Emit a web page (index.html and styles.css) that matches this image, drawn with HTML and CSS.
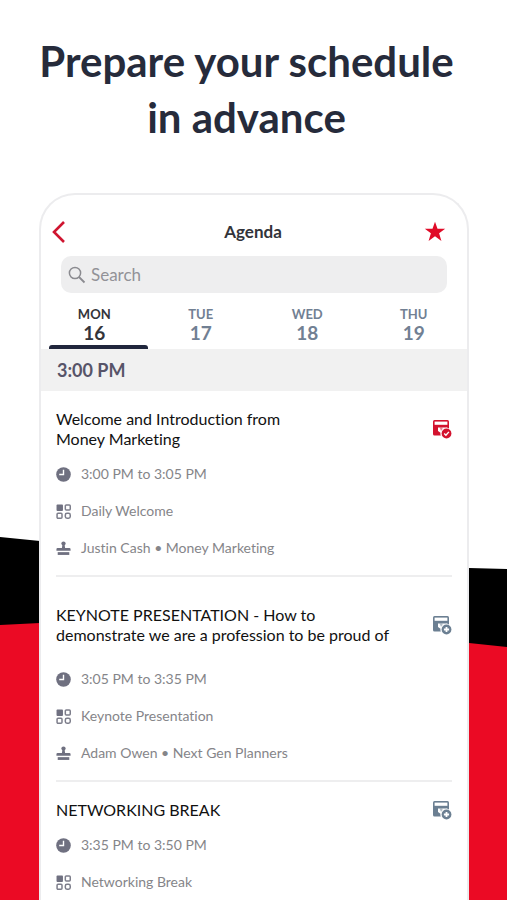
FILE: index.html
```html
<!DOCTYPE html>
<html lang="en">
<head>
    <meta charset="UTF-8">
    <meta name="viewport" content="width=device-width, initial-scale=1.0">
    <title>Agenda</title>
    <link rel="stylesheet" href="styles.css">
</head>
<body>

<!-- shared icons -->
<svg class="sprite" aria-hidden="true">
    <symbol id="clock" viewBox="0 0 14 14">
        <circle cx="7" cy="7" r="6.8" fill="#6f7080"/>
        <path d="M7 2.5V7H3" fill="none" stroke="#fff" stroke-width="1.3"/>
    </symbol>
    <symbol id="grid" viewBox="0 0 14 14">
        <rect x="0.5" y="0.5" width="6" height="6" rx="0.8" fill="#6f7080"/>
        <g fill="none" stroke="#7d7e8b" stroke-width="1.4">
            <rect x="8.7" y="1" width="4.6" height="4.6" rx="0.9"/>
            <rect x="1" y="8.7" width="4.6" height="4.6" rx="0.9"/>
            <rect x="8.7" y="8.7" width="4.6" height="4.6" rx="1.6"/>
        </g>
    </symbol>
    <symbol id="speaker" viewBox="0 0 14 14">
        <g fill="#6f7080">
            <circle cx="7" cy="2.4" r="2"/>
            <path d="M6 3.5h2L8.5 6.6h4q1.1 0 1.1 1.1V9.2H.4V7.7Q.4 6.6 1.5 6.6h4z"/>
            <path d="M1.6 10.4h10.8v2.6H1.6z"/>
        </g>
    </symbol>
    <symbol id="calendar" viewBox="0 0 20 20">
        <rect x="1" y="1" width="16" height="15.5" rx="1.5" fill="currentColor"/>
        <rect x="2.6" y="2.6" width="12.8" height="3.2" fill="#fff"/>
        <path d="M6 8.4h9.5v2.2L11 16.6H8.5v-2.8L6 12z" fill="#fff"/>
        <path d="M7.5 8.4h3v2.3l-1.5 1z" fill="currentColor" opacity="0.5"/>
        <circle cx="14.5" cy="14.5" r="5.7" fill="#fff"/>
        <circle cx="14.5" cy="14.5" r="4.9" fill="currentColor"/>
    </symbol>
</svg>

<div class="page">
    <svg class="backdrop" viewBox="0 0 507 900" preserveAspectRatio="none" aria-hidden="true">
        <path d="M0 537L40 541L469 568L507 569V900H0z" fill="#000"/>
        <path d="M0 625L40 623L469 643L507 647V900H0z" fill="#eb0a24"/>
    </svg>

    <h1 class="headline">Prepare your schedule<br>in advance</h1>

    <main class="phone">
        <header class="topbar">
            <button class="icon-btn" aria-label="Back">
                <svg width="24" height="24" viewBox="0 0 24 24"><path d="M17 2L7 12l10 10" fill="none" stroke="#cf1530" stroke-width="2.6"/></svg>
            </button>
            <h2 class="topbar-title">Agenda</h2>
            <button class="icon-btn" aria-label="Favourites">
                <svg width="24" height="24" viewBox="0 0 24 24"><path d="M12 1.8l2.5 7h7.7l-6.1 4.5 2.3 7.6-6.4-4.6-6.4 4.6 2.3-7.6-6.1-4.5h7.7z" fill="#e00b28"/></svg>
            </button>
        </header>

        <label class="search">
            <svg width="18" height="18" viewBox="0 0 18 18" aria-hidden="true"><circle cx="7" cy="7" r="5.6" fill="none" stroke="#8b8b90" stroke-width="1.5"/><path d="M11 11l5.5 5.5" stroke="#8b8b90" stroke-width="1.8"/></svg>
            <input type="search" placeholder="Search" aria-label="Search">
        </label>

        <nav class="days">
            <button class="day active"><span class="day-name">MON</span><span class="day-num">16</span></button>
            <button class="day"><span class="day-name">TUE</span><span class="day-num">17</span></button>
            <button class="day"><span class="day-name">WED</span><span class="day-num">18</span></button>
            <button class="day"><span class="day-name">THU</span><span class="day-num">19</span></button>
        </nav>

        <h3 class="slot">3:00 PM</h3>

        <article class="session">
            <div class="session-head">
                <h4>Welcome and Introduction from<br>Money Marketing</h4>
                <button class="save saved" aria-label="Remove from my agenda">
                    <svg width="20" height="20"><use href="#calendar"/><path d="M12.2 14.6l1.7 1.7 3-3.4" fill="none" stroke="#fff" stroke-width="1.4"/></svg>
                </button>
            </div>
            <ul class="details">
                <li><svg><use href="#clock"/></svg>3:00 PM to 3:05 PM</li>
                <li><svg><use href="#grid"/></svg>Daily Welcome</li>
                <li><svg><use href="#speaker"/></svg>Justin Cash • Money Marketing</li>
            </ul>
        </article>

        <article class="session">
            <div class="session-head tall">
                <h4>KEYNOTE PRESENTATION - How to<br>demonstrate we are a profession to be proud of</h4>
                <button class="save" aria-label="Add to my agenda">
                    <svg width="20" height="20"><use href="#calendar"/><path d="M14.5 11.9v5.2M11.9 14.5h5.2" stroke="#fff" stroke-width="1.8"/></svg>
                </button>
            </div>
            <ul class="details">
                <li><svg><use href="#clock"/></svg>3:05 PM to 3:35 PM</li>
                <li><svg><use href="#grid"/></svg>Keynote Presentation</li>
                <li><svg><use href="#speaker"/></svg>Adam Owen • Next Gen Planners</li>
            </ul>
        </article>

        <article class="session">
            <div class="session-head">
                <h4>NETWORKING BREAK</h4>
                <button class="save" aria-label="Add to my agenda">
                    <svg width="20" height="20"><use href="#calendar"/><path d="M14.5 11.9v5.2M11.9 14.5h5.2" stroke="#fff" stroke-width="1.8"/></svg>
                </button>
            </div>
            <ul class="details">
                <li><svg><use href="#clock"/></svg>3:35 PM to 3:50 PM</li>
                <li><svg><use href="#grid"/></svg>Networking Break</li>
            </ul>
        </article>
    </main>
</div>

</body>
</html>
```
FILE: styles.css
```css
* {
    box-sizing: border-box;
}
body {
    margin: 0;
    font-family: Lato, sans-serif;
    font-variant-ligatures: none;
    background-color: #fff;
}
h1, h2, h3, h4, ul {
    margin: 0;
    padding: 0;
}
button {
    padding: 0;
    border: none;
    background: none;
    font-family: inherit;
    cursor: pointer;
}
svg {
    display: block;
    flex-shrink: 0;
}
.sprite {
    position: absolute;
    width: 0;
    height: 0;
}
.page {
    position: relative;
    display: flex;
    flex-direction: column;
    height: 100vh;
    overflow: hidden;
}
.backdrop {
    position: absolute;
    inset: 0;
    width: 100%;
    height: 100%;
    z-index: -1;
}
.headline {
    padding: 33px 14px 48px 0;
    text-align: center;
    font-size: 42px;
    line-height: 56px;
    color: #262b3b;
}
.phone {
    flex: 1 0 auto;
    margin: 0 38px 0 39px;
    border: 2px solid #ececee;
    border-bottom: none;
    border-radius: 36px 36px 0 0;
    background-color: #fff;
}
.topbar {
    display: flex;
    justify-content: space-between;
    align-items: center;
    padding: 25px 20px 12px 6px;
}
.icon-btn {
    width: 24px;
    height: 24px;
}
.topbar-title {
    padding-left: 12px;
    font-size: 17px;
    line-height: 24px;
    color: #33343a;
}
.search {
    display: flex;
    align-items: center;
    gap: 5px;
    height: 37px;
    margin: 0 20px;
    padding: 0 7px;
    border-radius: 10px;
    background-color: #eeeeef;
}
.search input {
    flex: 1;
    min-width: 0;
    padding: 0;
    border: none;
    outline: none;
    background: none;
    font-family: inherit;
    font-size: 17px;
}
.search input::placeholder {
    color: #929297;
}
.days {
    display: flex;
    padding-top: 12px;
}
.day {
    flex: 1;
    display: flex;
    flex-direction: column;
    align-items: center;
    height: 44px;
    color: #718093;
}
.day.active {
    color: #33343a;
}
.day.active::after {
    content: "";
    align-self: stretch;
    height: 4px;
    margin: 2px 0 0 8px;
    border-radius: 3px 3px 0 0;
    background-color: #20263c;
}
.day-name {
    font-size: 13px;
    line-height: 18px;
    font-weight: bold;
}
.day-num {
    font-size: 19px;
    line-height: 20px;
    font-weight: bold;
}
.slot {
    padding: 0 16px;
    background-color: #f1f1f1;
    font-size: 18px;
    line-height: 42px;
    color: #575468;
}
.session {
    margin: 0 15px;
    padding: 18px 0 17px;
    border-bottom: 2px solid #eeeeef;
}
.session:last-child {
    border-bottom: none;
}
.session-head {
    display: flex;
    justify-content: space-between;
    align-items: center;
}
.session-head.tall {
    min-height: 59px;
}
.session h4 {
    font-size: 16px;
    line-height: 20px;
    font-weight: normal;
    color: #111;
}
.save {
    color: #6b7f92;
}
.saved {
    color: #d3122e;
}
.details {
    display: flex;
    flex-direction: column;
    gap: 17px;
    padding-top: 15px;
    list-style: none;
}
.details li {
    display: flex;
    align-items: center;
    gap: 10px;
    font-size: 14px;
    line-height: 20px;
    color: #858589;
}
.details svg {
    width: 15px;
    height: 15px;
}
```
